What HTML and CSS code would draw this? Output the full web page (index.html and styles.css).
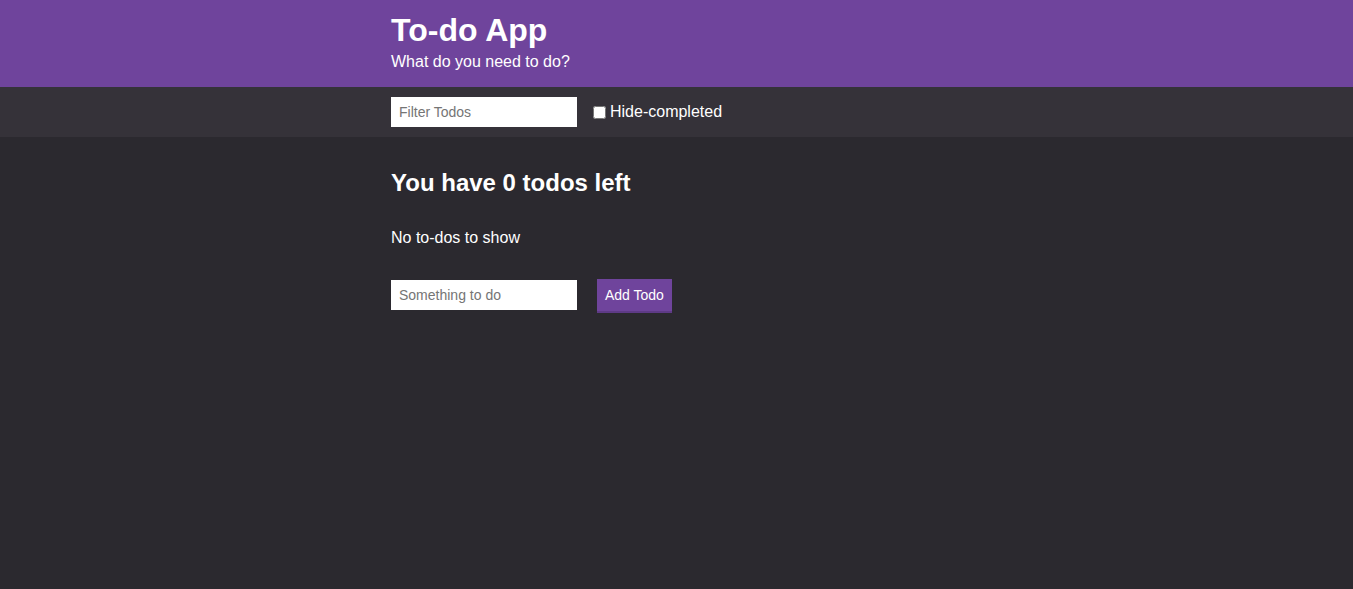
FILE: index.html
```html
<!DOCTYPE html>
<html>
<head>
<meta charset="utf-8">
<link rel="stylesheet" href="styles.css">
</head>
<body>
<header class="header">
  <div class="container">
    <h1 class="title">To-do App</h1>
    <p class="subtitle">What do you need to do?</p>
  </div>
</header>
<div class="actions">
  <div class="container actions-row">
    <input class="input" type="text" placeholder="Filter Todos">
    <label class="check-label"><input class="checkbox" type="checkbox">Hide-completed</label>
  </div>
</div>
<main class="container main">
  <h2 class="summary">You have 0 todos left</h2>
  <p class="empty">No to-dos to show</p>
  <form class="add-form">
    <input class="input" type="text" placeholder="Something to do">
    <button class="button" type="button">Add Todo</button>
  </form>
</main>
</body>
</html>
```
FILE: styles.css
```css
html, body {
  margin: 0;
  padding: 0;
  background: #2b292f;
  color: #ffffff;
  font-family: "Liberation Sans", Arial, sans-serif;
}
.container {
  width: 571px;
  margin: 0 auto;
}
.header {
  background: #6f449c;
  height: 87px;
  box-sizing: border-box;
  padding-top: 12px;
}
.title {
  margin: 0;
  font-size: 32px;
  font-weight: bold;
  line-height: 37px;
}
.subtitle {
  margin: 3px 0 0;
  font-size: 16px;
  line-height: 20px;
}
.actions {
  background: #353239;
  height: 50px;
  box-sizing: border-box;
  padding-top: 10px;
}
.actions-row {
  display: flex;
  align-items: center;
}
.input {
  width: 186px;
  height: 30px;
  box-sizing: border-box;
  border: none;
  padding: 0 8px;
  margin: 0;
  font-family: "Liberation Sans", Arial, sans-serif;
  font-size: 14px;
  background: #fff;
  color: #333;
}
.input::placeholder {
  color: #757575;
}
.check-label {
  display: flex;
  align-items: center;
  margin-left: 16px;
  font-size: 16px;
}
.checkbox {
  width: 13px;
  height: 13px;
  margin: 0 4px 0 0;
}
.main {
  padding-top: 32px;
}
.summary {
  margin: 0;
  font-size: 24px;
  line-height: 28px;
  font-weight: bold;
}
.empty {
  margin: 32px 0 0;
  font-size: 16px;
  line-height: 18px;
}
.add-form {
  display: flex;
  align-items: flex-start;
  margin-top: 32px;
}
.add-form .input {
  margin-top: 1px;
}
.button {
  margin-left: 20px;
  height: 34px;
  box-sizing: border-box;
  padding: 0 8px;
  background: #6f449c;
  color: #fff;
  border: none;
  border-bottom: 2px solid #5e3a86;
  font-family: "Liberation Sans", Arial, sans-serif;
  font-size: 14px;
  cursor: pointer;
}
```
